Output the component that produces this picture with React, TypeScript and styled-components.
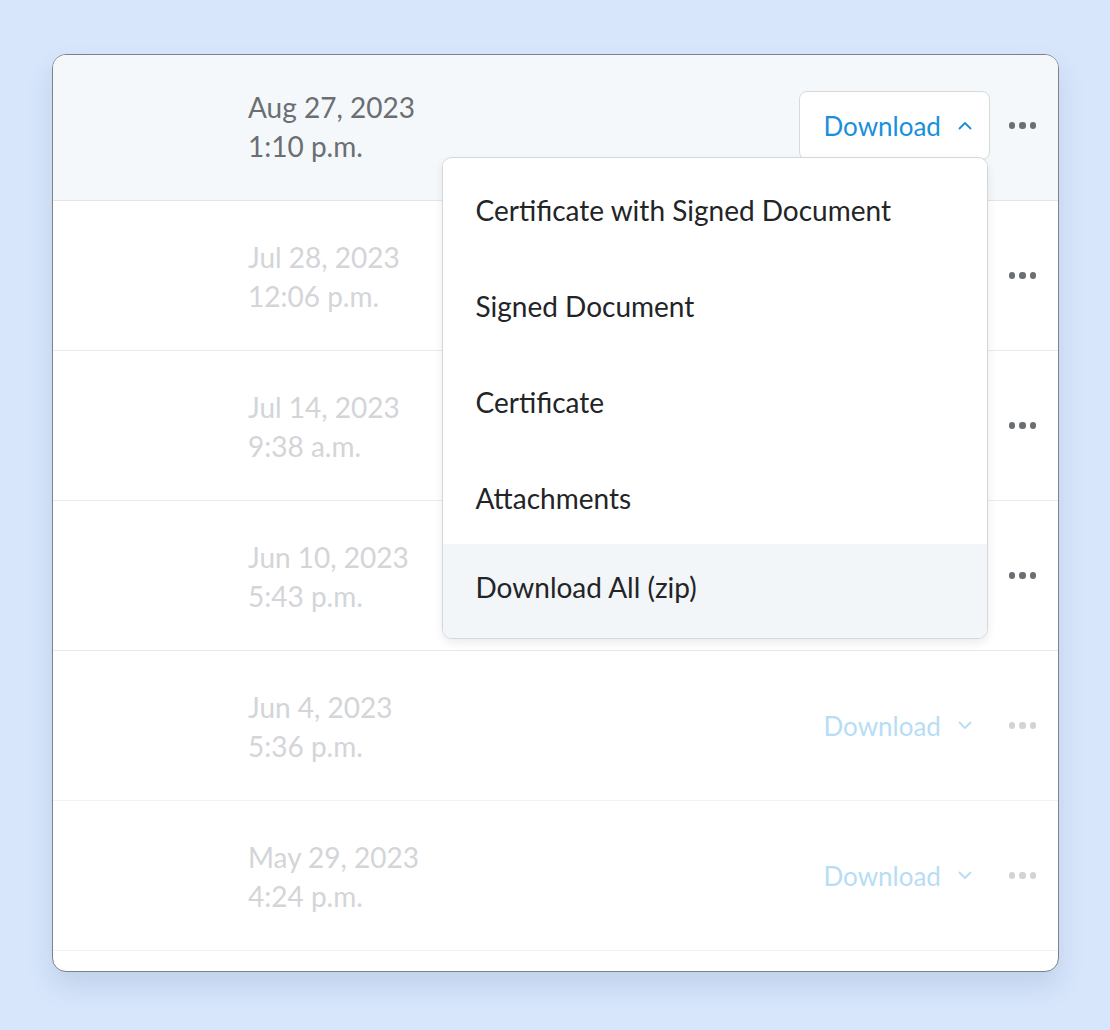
import React from 'react';
import styled, { createGlobalStyle } from 'styled-components';

const GlobalStyle = createGlobalStyle`
  html, body {
    margin: 0;
    padding: 0;
    background: #d7e6fb;
    font-family: Lato, 'Noto Sans', sans-serif;
  }
`;

const Page = styled.div`
  width: 1110px;
  height: 1030px;
  padding: 54px 0 0 52px;
  box-sizing: border-box;
`;

const Card = styled.div`
  width: 1007px;
  height: 918px;
  box-sizing: border-box;
  border: 1px solid #7d8289;
  border-radius: 14px;
  background: #fff;
  overflow: hidden;
  box-shadow: 0 14px 26px rgba(70, 100, 150, 0.16);
`;

const List = styled.div`
  margin-top: -4px;
  display: flex;
  flex-direction: column;
`;

const Row = styled.div<{ $active?: boolean; $line: string; $raised?: boolean }>`
  position: relative;
  z-index: ${(p) => (p.$raised ? 2 : 1)};
  height: 150px;
  box-sizing: border-box;
  display: flex;
  align-items: center;
  padding: 0 20px 0 195px;
  background: ${(p) => (p.$active ? '#f5f8fb' : '#fff')};
  border-bottom: 1px solid ${(p) => p.$line};
`;

const DateBlock = styled.div<{ $faded?: boolean }>`
  flex: 1;
  display: flex;
  flex-direction: column;
  color: ${(p) => (p.$faded ? '#d3d5d8' : '#6b6e72')};
  margin-top: 2px;
`;

const DateLine = styled.div`
  font-size: 28px;
  line-height: 39px;
`;

const TimeLine = styled(DateLine)``;

const Actions = styled.div`
  display: flex;
  align-items: center;
  gap: 17px;
`;

const MenuAnchor = styled.div`
  position: relative;
`;

const DownloadButton = styled.button<{ $open?: boolean; $faded?: boolean }>`
  display: flex;
  align-items: center;
  gap: 17px;
  height: 69px;
  width: 191px;
  box-sizing: border-box;
  padding: 0 20px 0 24px;
  background: ${(p) => (p.$open ? '#fff' : 'transparent')};
  border: 1.5px solid ${(p) => (p.$open ? '#d8d9db' : 'transparent')};
  border-radius: 8px;
  font-family: Lato, sans-serif;
  font-size: 26px;
  color: ${(p) => (p.$faded ? '#b7ddf5' : '#1a8fdc')};
  cursor: pointer;
`;

const Chevron = styled.svg`
  width: 14px;
  height: 9px;
  flex-shrink: 0;
`;

const Dots = styled.div<{ $faded?: boolean }>`
  display: flex;
  gap: 4px;
  padding: 0 2px;
  span {
    width: 6.5px;
    height: 6.5px;
    border-radius: 50%;
    background: ${(p) => (p.$faded ? '#d3d3d3' : '#6b6e72')};
  }
`;

const Menu = styled.div`
  position: absolute;
  top: calc(100% - 3px);
  right: 2px;
  width: 546px;
  box-sizing: border-box;
  padding-top: 2px;
  background: #fff;
  border: 1.5px solid #d6d7d9;
  border-radius: 10px;
  box-shadow: 0 4px 10px rgba(0, 0, 0, 0.08);
  overflow: hidden;
`;

const MenuItem = styled.div<{ $hover?: boolean }>`
  height: 96px;
  box-sizing: border-box;
  display: flex;
  align-items: center;
  padding: 4px 0 0 33px;
  font-size: 28px;
  color: #232427;
  background: ${(p) => (p.$hover ? '#f3f6f9' : '#fff')};

  &:last-child {
    height: 94px;
    padding-bottom: 12px;
  }
`;

type Entry = {
  date: string;
  time: string;
  fadedDots: boolean;
  line: string;
};

const entries: Entry[] = [
  { date: 'Aug 27, 2023', time: '1:10 p.m.', fadedDots: false, line: '#e2e4e6' },
  { date: 'Jul 28, 2023', time: '12:06 p.m.', fadedDots: false, line: '#ebebeb' },
  { date: 'Jul 14, 2023', time: '9:38 a.m.', fadedDots: false, line: '#ebebeb' },
  { date: 'Jun 10, 2023', time: '5:43 p.m.', fadedDots: false, line: '#e9e9e9' },
  { date: 'Jun 4, 2023', time: '5:36 p.m.', fadedDots: true, line: '#f3f3f3' },
  { date: 'May 29, 2023', time: '4:24 p.m.', fadedDots: true, line: '#f3f3f3' },
];

const menuItems = ['Certificate with Signed Document', 'Signed Document', 'Certificate', 'Attachments', 'Download All (zip)'];

const ChevronIcon = ({ up }: { up: boolean }) => (
  <Chevron viewBox='0 0 14 9' fill='none'>
    <path
      d={up ? 'M1.5 7.5 L7 2 L12.5 7.5' : 'M1.5 1.5 L7 7 L12.5 1.5'}
      stroke='currentColor'
      strokeWidth='1.8'
      strokeLinecap='round'
      strokeLinejoin='round'
    />
  </Chevron>
);

export default function App() {
  return (
    <>
      <GlobalStyle />
      <Page>
        <Card>
          <List>
            {entries.map((e, i) => {
              const open = i === 0;
              return (
                <Row key={e.date} $active={open} $raised={open} $line={e.line}>
                  <DateBlock $faded={!open}>
                    <DateLine>{e.date}</DateLine>
                    <TimeLine>{e.time}</TimeLine>
                  </DateBlock>
                  <Actions>
                    <MenuAnchor>
                      <DownloadButton $open={open} $faded={!open}>
                        Download
                        <ChevronIcon up={open} />
                      </DownloadButton>
                      {open && (
                        <Menu>
                          {menuItems.map((m, j) => (
                            <MenuItem key={m} $hover={j === menuItems.length - 1}>
                              {m}
                            </MenuItem>
                          ))}
                        </Menu>
                      )}
                    </MenuAnchor>
                    <Dots $faded={e.fadedDots}>
                      <span />
                      <span />
                      <span />
                    </Dots>
                  </Actions>
                </Row>
              );
            })}
          </List>
        </Card>
      </Page>
    </>
  );
}
